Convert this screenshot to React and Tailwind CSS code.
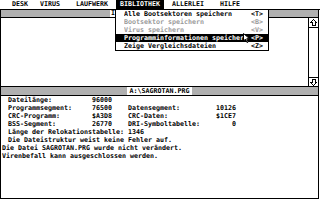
import React from "react";

const gray = "bg-[#b0b0b0]";

function UpArrow() {
  return (
    <svg width="7" height="7" viewBox="0 0 7 7" shapeRendering="crispEdges">
      <path d="M3.5 0.5 L6.5 3.5 L5 3.5 L5 6.5 L2 6.5 L2 3.5 L0.5 3.5 Z" fill="white" stroke="black" strokeWidth="1" />
    </svg>
  );
}

function DownArrow() {
  return (
    <svg width="7" height="7" viewBox="0 0 7 7" shapeRendering="crispEdges">
      <path d="M3.5 6.5 L6.5 3.5 L5 3.5 L5 0.5 L2 0.5 L2 3.5 L0.5 3.5 Z" fill="white" stroke="black" strokeWidth="1" />
    </svg>
  );
}

function Cursor() {
  return (
    <svg width="7" height="10" viewBox="0 0 7 10" className="absolute left-[243px] top-[33px]">
      <path d="M0.5 0.5 L0.5 8 L2.5 6 L4 9.5 L5.2 9 L3.8 5.7 L6.5 5.7 Z" fill="white" stroke="black" strokeWidth="1" />
    </svg>
  );
}

const menuItems = [
  { label: "Alle Bootsektoren speichern", key: "<T>" },
  { label: "Bootsektor speichern", key: "<B>", disabled: true },
  { label: "Virus speichern", key: "<V>", disabled: true },
  { label: "Programminformationen speichern", key: "<P>", active: true },
  { label: "Zeige Vergleichsdateien", key: "<Z>" },
];

const stats = [
  ["Dateilänge:", "96000", "", ""],
  ["Programmsegment:", "76500", "Datensegment:", "10126"],
  ["CRC-Programm:", "$A3D8", "CRC-Daten:", "$1CE7"],
  ["BSS-Segment:", "26770", "DRI-Symboltabelle:", "0"],
];

export default function App() {
  return (
    <div className="relative w-[320px] h-[200px] overflow-hidden bg-white text-black font-['DejaVu_Sans_Mono','Liberation_Mono',monospace] text-[6.65px] leading-[8px] font-bold whitespace-nowrap">
      {/* menu bar */}
      <div className="h-[10px] border-b border-black flex items-stretch pl-[12px]">
        <span className="w-[28px] leading-[9px]">DESK</span>
        <span className="w-[36px] leading-[9px]">VIRUS</span>
        <span className="w-[40px] leading-[9px]">LAUFWERK</span>
        <span className="w-[48px] bg-black text-white pl-[4px] leading-[9px]">BIBLIOTHEK</span>
        <span className="w-[8px]" />
        <span className="w-[48px] leading-[9px]">ALLERLEI</span>
        <span className="leading-[9px]">HILFE</span>
      </div>

      {/* top window */}
      <div className="w-[319px] h-[77px] border-l border-r border-b border-black flex flex-col">
        <div className={`h-[8px] border-b border-black ${gray} flex pl-[109px]`}>
          <div className="w-[6px] bg-white pl-[1px] leading-[7px] overflow-hidden">I</div>
        </div>
        <div className="flex-1 flex">
          <div className="flex-1" />
          <div className="w-[10px] border-l border-black flex flex-col">
            <div className="h-[10px] border-b border-black flex items-center justify-center">
              <UpArrow />
            </div>
            <div className="flex-1" />
            <div className="h-[9px] border-t border-black flex items-center justify-center">
              <DownArrow />
            </div>
          </div>
        </div>
      </div>

      {/* bottom window */}
      <div className="w-[319px] h-[112px] border-l border-r border-b border-black flex flex-col">
        <div className={`h-[9px] border-b border-black ${gray} flex justify-center`}>
          <div className="bg-white px-[3px] leading-[8px]">A:\SAGROTAN.PRG</div>
        </div>
        <div className="flex-1">
          <div className="grid grid-cols-[84px_20px_16px_88px_20px] pl-[7px]">
            {stats.map((r, i) => (
              <React.Fragment key={i}>
                <span>{r[0]}</span>
                <span className="text-right">{r[1]}</span>
                <span />
                <span>{r[2]}</span>
                <span className="text-right">{r[3]}</span>
              </React.Fragment>
            ))}
          </div>
          <div className="pl-[7px]">Länge der Relokationstabelle: 1346</div>
          <div className="pl-[7px]">Die Dateistruktur weist keine Fehler auf.</div>
          <div className="pl-[1px]">Die Datei SAGROTAN.PRG wurde nicht verändert.</div>
          <div className="pl-[1px]">Virenbefall kann ausgeschlossen werden.</div>
        </div>
      </div>

      {/* dropdown */}
      <div className="absolute left-[115px] top-[9px] w-[154px] border border-black bg-white">
        {menuItems.map((m) => (
          <div
            key={m.label}
            className={`h-[8px] grid grid-cols-[127px_1fr] pl-[8px] leading-[8px] ${
              m.active ? "bg-black text-white" : m.disabled ? "text-[#9a9a9a]" : ""
            }`}
          >
            <span className="overflow-hidden">{m.label}</span>
            <span>{m.key}</span>
          </div>
        ))}
      </div>
      <Cursor />
    </div>
  );
}
